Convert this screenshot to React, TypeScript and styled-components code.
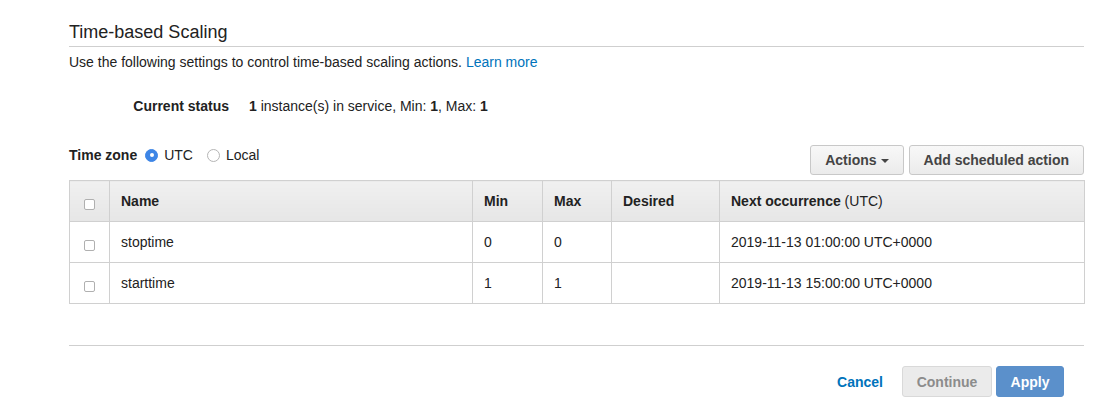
import React from "react";
import styled, { createGlobalStyle } from "styled-components";

const Global = createGlobalStyle`
  html, body { margin: 0; padding: 0; background: #fff; }
  body { font-family: "Liberation Sans", Arial, sans-serif; color: #222; font-size: 14px; }
  * { box-sizing: border-box; }
`;

const Page = styled.div`
  width: 1099px;
  padding: 21px 15px 0 69px;
`;

const Title = styled.h2`
  margin: 0;
  font-size: 18px;
  font-weight: normal;
  line-height: 22px;
  padding-bottom: 3px;
  border-bottom: 1px solid #cfcfcf;
  color: #222;
`;

const Desc = styled.p`
  margin: 6px 0 0;
  line-height: 18px;
  font-size: 14px;
`;

const Link = styled.a`
  color: #0073bb;
  text-decoration: none;
`;

const StatusRow = styled.div`
  display: flex;
  gap: 20px;
  margin-top: 26px;
  line-height: 18px;
`;

const StatusLabel = styled.div`
  width: 160px;
  text-align: right;
  font-weight: bold;
`;

const Toolbar = styled.div`
  display: flex;
  justify-content: space-between;
  align-items: flex-start;
  margin-top: 30px;
`;

const TimeZone = styled.div`
  display: flex;
  align-items: center;
  line-height: 20px;
  gap: 6px;
`;

const TZLabel = styled.span`
  font-weight: bold;
  margin-right: 2px;
`;

const Radio = styled.span<{ $checked?: boolean }>`
  width: 13px;
  height: 13px;
  border-radius: 50%;
  display: inline-flex;
  align-items: center;
  justify-content: center;
  background: ${(p) => (p.$checked ? "#3d85e6" : "#fff")};
  border: 1px solid ${(p) => (p.$checked ? "#3d85e6" : "#b5b5b5")};
  &::after {
    content: "";
    width: 4px;
    height: 4px;
    border-radius: 50%;
    background: ${(p) => (p.$checked ? "#fff" : "transparent")};
  }
`;

const RadioText = styled.span`
  margin-right: 8px;
`;

const Buttons = styled.div`
  display: flex;
  gap: 5px;
`;

const GrayButton = styled.button`
  height: 30px;
  padding: 0 14px;
  border: 1px solid #c8c8c8;
  border-radius: 3px;
  background: linear-gradient(#f8f8f8, #ebebeb);
  font-family: "Liberation Sans", Arial, sans-serif;
  font-size: 14px;
  font-weight: bold;
  color: #444;
  display: inline-flex;
  align-items: center;
  gap: 4px;
`;

const Caret = styled.span`
  width: 0;
  height: 0;
  border-left: 4px solid transparent;
  border-right: 4px solid transparent;
  border-top: 4px solid #444;
  margin-top: 1px;
`;

const Table = styled.table`
  margin-top: 5px;
  width: 1015px;
  border-collapse: collapse;
  table-layout: fixed;
  font-size: 14px;
`;

const Th = styled.th<{ $w: number }>`
  width: ${(p) => p.$w}px;
  height: 41px;
  text-align: left;
  padding: 0 11px;
  font-weight: bold;
  border: 1px solid #d0d0d0;
  background: linear-gradient(#f0f0f0, #e6e6e6);
  color: #222;
`;

const Td = styled.td`
  height: 41px;
  padding: 0 11px;
  border: 1px solid #d0d0d0;
  color: #222;
`;

const CheckCell = styled.td`
  padding: 0;
  text-align: center;
  border: 1px solid #d0d0d0;
`;

const CheckHead = styled.th`
  width: 40px;
  padding: 0;
  text-align: center;
  border: 1px solid #d0d0d0;
  background: linear-gradient(#f0f0f0, #e6e6e6);
`;

const Check = styled.span`
  display: inline-block;
  width: 11px;
  height: 11px;
  margin-top: 6px;
  border: 1px solid #b0b0b0;
  border-radius: 2px;
  background: #fff;
  vertical-align: middle;
`;

const Normal = styled.span`
  font-weight: normal;
`;

const Divider = styled.div`
  margin-top: 41px;
  border-top: 1px solid #cfcfcf;
`;

const Footer = styled.div`
  display: flex;
  justify-content: flex-end;
  align-items: center;
  gap: 4px;
  margin-top: 20px;
  padding-right: 20px;
`;

const CancelLink = styled.a`
  color: #0073bb;
  font-weight: bold;
  margin-right: 15px;
`;

const DisabledButton = styled.button`
  width: 90px;
  height: 31px;
  border: 1px solid #d9d9d9;
  border-radius: 3px;
  background: #ebebeb;
  color: #8c8c8c;
  font-family: "Liberation Sans", Arial, sans-serif;
  font-size: 14px;
  font-weight: bold;
`;

const PrimaryButton = styled.button`
  width: 68px;
  height: 31px;
  border: 1px solid #5a8fca;
  border-radius: 3px;
  background: #5b90cb;
  color: #fff;
  font-family: "Liberation Sans", Arial, sans-serif;
  font-size: 14px;
  font-weight: bold;
`;

const rows = [
  { name: "stoptime", min: "0", max: "0", desired: "", next: "2019-11-13 01:00:00 UTC+0000" },
  { name: "starttime", min: "1", max: "1", desired: "", next: "2019-11-13 15:00:00 UTC+0000" },
];

export default function App() {
  return (
    <>
      <Global />
      <Page>
        <Title>Time-based Scaling</Title>
        <Desc>
          Use the following settings to control time-based scaling actions. <Link href="#">Learn more</Link>
        </Desc>
        <StatusRow>
          <StatusLabel>Current status</StatusLabel>
          <div>
            <b>1</b> instance(s) in service, Min: <b>1</b>, Max: <b>1</b>
          </div>
        </StatusRow>
        <Toolbar>
          <TimeZone>
            <TZLabel>Time zone</TZLabel>
            <Radio $checked />
            <RadioText>UTC</RadioText>
            <Radio />
            <RadioText>Local</RadioText>
          </TimeZone>
          <Buttons>
            <GrayButton>
              Actions <Caret />
            </GrayButton>
            <GrayButton>Add scheduled action</GrayButton>
          </Buttons>
        </Toolbar>
        <Table>
          <thead>
            <tr>
              <CheckHead>
                <Check />
              </CheckHead>
              <Th $w={363}>Name</Th>
              <Th $w={70}>Min</Th>
              <Th $w={69}>Max</Th>
              <Th $w={108}>Desired</Th>
              <Th $w={365}>
                Next occurrence <Normal>(UTC)</Normal>
              </Th>
            </tr>
          </thead>
          <tbody>
            {rows.map((r) => (
              <tr key={r.name}>
                <CheckCell>
                  <Check />
                </CheckCell>
                <Td>{r.name}</Td>
                <Td>{r.min}</Td>
                <Td>{r.max}</Td>
                <Td>{r.desired}</Td>
                <Td>{r.next}</Td>
              </tr>
            ))}
          </tbody>
        </Table>
        <Divider />
        <Footer>
          <CancelLink>Cancel</CancelLink>
          <DisabledButton disabled>Continue</DisabledButton>
          <PrimaryButton>Apply</PrimaryButton>
        </Footer>
      </Page>
    </>
  );
}
